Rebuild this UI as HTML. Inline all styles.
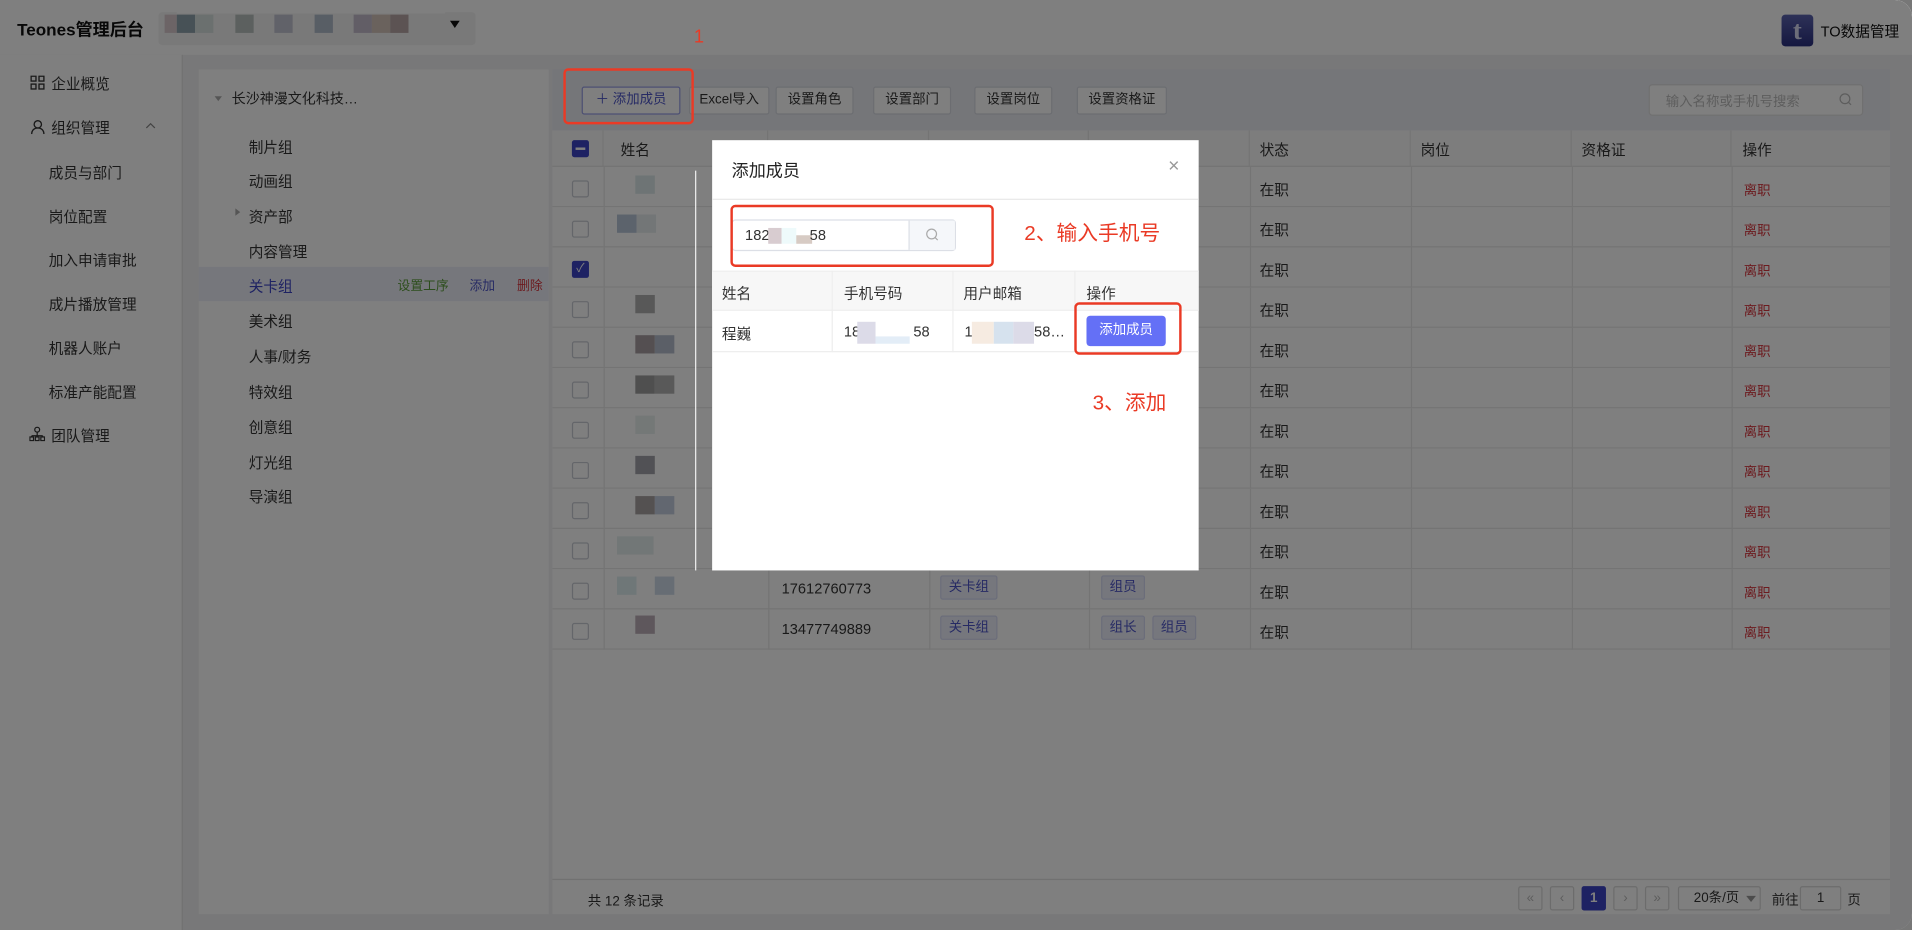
<!DOCTYPE html>
<html><head><meta charset="utf-8"><style>
*{box-sizing:border-box;margin:0;padding:0}
html,body{width:1912px;height:930px;overflow:hidden;background:#777}
body{font-family:"Liberation Sans","Noto Sans CJK SC",sans-serif;color:#333}
#w{position:absolute;left:0;top:0;width:1568px;height:763px;transform:scale(1.2194,1.2189);transform-origin:0 0;background:#f0f0f2;border-radius:0 14px 14px 0;overflow:hidden}
.a{position:absolute;white-space:nowrap}
.f12{font-size:12px}
.btn{position:absolute;top:71px;height:23px;border:1px solid #d8dbe3;background:#fff;border-radius:2px;font-size:11px;line-height:21px;text-align:center;color:#333}
.cb{position:absolute;left:469px;width:14px;height:14px;border:1px solid #c9ccd4;border-radius:2px;background:#fff}
.row{position:absolute;left:453px;width:1097px;height:33px;border-bottom:1px solid #e8e8e8;background:#fff}
.cell{position:absolute;top:0;height:33px;border-right:1px solid #e8e8e8}
.tag{position:absolute;height:20px;padding:0 6px;background:#eceefb;border:1px solid #d6daf5;border-radius:2px;color:#4c55c8;font-size:11px;line-height:18px}
.pg{position:absolute;top:727px;width:20px;height:20px;border:1px solid #d9d9d9;border-radius:2px;background:#fff;font-size:11px;line-height:18px;text-align:center;color:#bbb}
.red{position:absolute;border:2.5px solid #ea3a25;border-radius:4px}
.rt{position:absolute;color:#ea3a25;font-size:17px;white-space:nowrap}
.blur{position:absolute;height:15px}
</style></head><body><div id="w">
<div class="a" style="left:0;top:0;width:1568px;height:45px;background:#fff"></div>
<div class="a" style="left:14px;top:14px;font-size:14px;font-weight:bold;color:#111">Teones管理后台</div>
<div class="a" style="left:130px;top:10px;width:260px;height:27px;background:#f3f3f3;border-radius:3px"></div>
<div class="a" style="left:145px;top:8px;width:220px;height:3px;background:#fff"></div>
<div class="blur" style="left:135px;top:12px;width:10px;background:#d8c9cc"></div>
<div class="blur" style="left:145px;top:12px;width:15px;background:#8fa3ad"></div>
<div class="blur" style="left:160px;top:12px;width:15px;background:#d6e0de"></div>
<div class="blur" style="left:193px;top:12px;width:15px;background:#b8c1be"></div>
<div class="blur" style="left:225px;top:12px;width:15px;background:#c3c5d3"></div>
<div class="blur" style="left:258px;top:12px;width:15px;background:#b0bccb"></div>
<div class="blur" style="left:290px;top:12px;width:15px;background:#c4bccd"></div>
<div class="blur" style="left:305px;top:12px;width:15px;background:#d4c5bb"></div>
<div class="blur" style="left:320px;top:12px;width:15px;background:#b8a6a6"></div>
<div class="a" style="left:369px;top:17px;width:0;height:0;border-left:4px solid transparent;border-right:4px solid transparent;border-top:6px solid #111"></div>
<div class="a" style="left:1461px;top:12px;width:26px;height:26px;border-radius:3px;background:linear-gradient(#5c64b0,#2a2f80);color:#d8dbf2;font-weight:bold;font-size:22px;line-height:26px;text-align:center;font-family:'Liberation Serif',serif">t</div>
<div class="a f12" style="left:1493px;top:17px;color:#111">TO数据管理</div>
<div class="a" style="left:0;top:45px;width:150px;height:718px;background:#fff;border-right:1px solid #e3e3e3"></div>
<svg class="a" style="left:25px;top:62px" width="12" height="12" viewBox="0 0 12 12" fill="none" stroke="#333" stroke-width="1.1"><rect x=".5" y=".5" width="4" height="4"/><rect x="7" y=".5" width="4" height="4"/><rect x=".5" y="7" width="4" height="4"/><rect x="7" y="7" width="4" height="4"/></svg>
<div class="a f12" style="left:42px;top:60px">企业概览</div>
<svg class="a" style="left:25px;top:98px" width="12" height="12" viewBox="0 0 12 12" fill="none" stroke="#333" stroke-width="1.1"><circle cx="6" cy="4" r="3"/><path d="M1 12c0-3 2-5 5-5s5 2 5 5"/></svg>
<div class="a f12" style="left:42px;top:96px">组织管理</div>
<svg class="a" style="left:119px;top:100px" width="9" height="6" viewBox="0 0 9 6" fill="none" stroke="#888"><path d="M1 5L4.5 1.5L8 5"/></svg>
<div class="a f12" style="left:40px;top:133px">成员与部门</div>
<div class="a f12" style="left:40px;top:169px">岗位配置</div>
<div class="a f12" style="left:40px;top:205px">加入申请审批</div>
<div class="a f12" style="left:40px;top:241px">成片播放管理</div>
<div class="a f12" style="left:40px;top:277px">机器人账户</div>
<div class="a f12" style="left:40px;top:313px">标准产能配置</div>
<svg class="a" style="left:24px;top:350px" width="13" height="12" viewBox="0 0 13 12" fill="none" stroke="#333" stroke-width="1"><circle cx="6.5" cy="2.5" r="2"/><path d="M6.5 4.5v3M2 7.5h9M2 7.5v1M11 7.5v1M6.5 7.5v1"/><rect x=".5" y="8.5" width="3" height="3"/><rect x="5" y="8.5" width="3" height="3"/><rect x="9.5" y="8.5" width="3" height="3"/></svg>
<div class="a f12" style="left:42px;top:349px">团队管理</div>
<div class="a" style="left:163px;top:57px;width:287px;height:693px;background:#fff"></div>
<div class="a" style="left:176px;top:79px;width:0;height:0;border-left:3px solid transparent;border-right:3px solid transparent;border-top:4px solid #aaa"></div>
<div class="a" style="left:190px;top:73px;font-size:11.5px">长沙神漫文化科技…</div>
<div class="a" style="left:163px;top:219px;width:287px;height:28px;background:#eceef8"></div>
<div class="a f12" style="left:204px;top:112px">制片组</div>
<div class="a f12" style="left:204px;top:140px">动画组</div>
<div class="a" style="left:193px;top:171px;width:0;height:0;border-top:3px solid transparent;border-bottom:3px solid transparent;border-left:4px solid #aaa"></div>
<div class="a f12" style="left:204px;top:169px">资产部</div>
<div class="a f12" style="left:204px;top:198px">内容管理</div>
<div class="a f12" style="left:204px;top:226px;color:#3c45c6">关卡组</div>
<div class="a" style="left:326px;top:227px;font-size:10.5px;color:#5a9d3a">设置工序</div>
<div class="a" style="left:385px;top:227px;font-size:10.5px;color:#4c55c8">添加</div>
<div class="a" style="left:424px;top:227px;font-size:10.5px;color:#d9363e">删除</div>
<div class="a f12" style="left:204px;top:255px">美术组</div>
<div class="a f12" style="left:204px;top:284px">人事/财务</div>
<div class="a f12" style="left:204px;top:313px">特效组</div>
<div class="a f12" style="left:204px;top:342px">创意组</div>
<div class="a f12" style="left:204px;top:371px">灯光组</div>
<div class="a f12" style="left:204px;top:399px">导演组</div>
<div class="a" style="left:453px;top:57px;width:1097px;height:693px;background:#fff"></div>
<div class="a" style="left:453px;top:57px;width:1097px;height:50px;background:#eaecf3"></div>
<div class="btn" style="left:477px;width:81px;border-color:#9aa0e6;color:#4c55c8">＋ 添加成员</div>
<div class="btn" style="left:565px;width:66px">Excel导入</div>
<div class="btn" style="left:636px;width:64px">设置角色</div>
<div class="btn" style="left:716px;width:64px">设置部门</div>
<div class="btn" style="left:799px;width:64px">设置岗位</div>
<div class="btn" style="left:883px;width:74px">设置资格证</div>
<div class="a" style="left:1352px;top:69px;width:176px;height:26px;background:#fff;border:1px solid #e0e0e0;border-radius:3px"></div>
<div class="a" style="left:1366px;top:75px;font-size:11px;color:#bbb">输入名称或手机号搜索</div>
<svg class="a" style="left:1508px;top:76px" width="11" height="12" viewBox="0 0 11 12" fill="none" stroke="#bbb"><circle cx="5" cy="5" r="4"/><path d="M8 8l2 2"/></svg>
<div class="row" style="top:107px;height:30px;background:#fafafa">
<div class="cell" style="left:0;width:42px;height:30px"></div><div class="cell" style="left:42px;width:135px;height:30px"></div><div class="cell" style="left:177px;width:132px;height:30px"></div><div class="cell" style="left:309px;width:131px;height:30px"></div><div class="cell" style="left:440px;width:132px;height:30px"></div><div class="cell" style="left:572px;width:132px;height:30px"></div><div class="cell" style="left:704px;width:132px;height:30px"></div><div class="cell" style="left:836px;width:131px;height:30px"></div>
</div>
<div class="a" style="left:469px;top:115px;width:14px;height:14px;background:#3c45c6;border-radius:2px"><div style="position:absolute;left:3px;top:6px;width:8px;height:2px;background:#fff"></div></div>
<div class="a f12" style="left:509px;top:114px">姓名</div>
<div class="a f12" style="left:1033px;top:114px">状态</div>
<div class="a f12" style="left:1165px;top:114px">岗位</div>
<div class="a f12" style="left:1297px;top:114px">资格证</div>
<div class="a f12" style="left:1429px;top:114px">操作</div>
<div class="row" style="top:137px"><div class="cell" style="left:42px"></div><div class="cell" style="left:177px"></div><div class="cell" style="left:309px"></div><div class="cell" style="left:440px"></div><div class="cell" style="left:572px"></div><div class="cell" style="left:704px"></div><div class="cell" style="left:836px"></div><div class="cell" style="left:967px"></div></div>
<div class="row" style="top:170px"><div class="cell" style="left:42px"></div><div class="cell" style="left:177px"></div><div class="cell" style="left:309px"></div><div class="cell" style="left:440px"></div><div class="cell" style="left:572px"></div><div class="cell" style="left:704px"></div><div class="cell" style="left:836px"></div><div class="cell" style="left:967px"></div></div>
<div class="row" style="top:203px"><div class="cell" style="left:42px"></div><div class="cell" style="left:177px"></div><div class="cell" style="left:309px"></div><div class="cell" style="left:440px"></div><div class="cell" style="left:572px"></div><div class="cell" style="left:704px"></div><div class="cell" style="left:836px"></div><div class="cell" style="left:967px"></div></div>
<div class="row" style="top:236px"><div class="cell" style="left:42px"></div><div class="cell" style="left:177px"></div><div class="cell" style="left:309px"></div><div class="cell" style="left:440px"></div><div class="cell" style="left:572px"></div><div class="cell" style="left:704px"></div><div class="cell" style="left:836px"></div><div class="cell" style="left:967px"></div></div>
<div class="row" style="top:269px"><div class="cell" style="left:42px"></div><div class="cell" style="left:177px"></div><div class="cell" style="left:309px"></div><div class="cell" style="left:440px"></div><div class="cell" style="left:572px"></div><div class="cell" style="left:704px"></div><div class="cell" style="left:836px"></div><div class="cell" style="left:967px"></div></div>
<div class="row" style="top:302px"><div class="cell" style="left:42px"></div><div class="cell" style="left:177px"></div><div class="cell" style="left:309px"></div><div class="cell" style="left:440px"></div><div class="cell" style="left:572px"></div><div class="cell" style="left:704px"></div><div class="cell" style="left:836px"></div><div class="cell" style="left:967px"></div></div>
<div class="row" style="top:335px"><div class="cell" style="left:42px"></div><div class="cell" style="left:177px"></div><div class="cell" style="left:309px"></div><div class="cell" style="left:440px"></div><div class="cell" style="left:572px"></div><div class="cell" style="left:704px"></div><div class="cell" style="left:836px"></div><div class="cell" style="left:967px"></div></div>
<div class="row" style="top:368px"><div class="cell" style="left:42px"></div><div class="cell" style="left:177px"></div><div class="cell" style="left:309px"></div><div class="cell" style="left:440px"></div><div class="cell" style="left:572px"></div><div class="cell" style="left:704px"></div><div class="cell" style="left:836px"></div><div class="cell" style="left:967px"></div></div>
<div class="row" style="top:401px"><div class="cell" style="left:42px"></div><div class="cell" style="left:177px"></div><div class="cell" style="left:309px"></div><div class="cell" style="left:440px"></div><div class="cell" style="left:572px"></div><div class="cell" style="left:704px"></div><div class="cell" style="left:836px"></div><div class="cell" style="left:967px"></div></div>
<div class="row" style="top:434px"><div class="cell" style="left:42px"></div><div class="cell" style="left:177px"></div><div class="cell" style="left:309px"></div><div class="cell" style="left:440px"></div><div class="cell" style="left:572px"></div><div class="cell" style="left:704px"></div><div class="cell" style="left:836px"></div><div class="cell" style="left:967px"></div></div>
<div class="row" style="top:467px"><div class="cell" style="left:42px"></div><div class="cell" style="left:177px"></div><div class="cell" style="left:309px"></div><div class="cell" style="left:440px"></div><div class="cell" style="left:572px"></div><div class="cell" style="left:704px"></div><div class="cell" style="left:836px"></div><div class="cell" style="left:967px"></div></div>
<div class="row" style="top:500px"><div class="cell" style="left:42px"></div><div class="cell" style="left:177px"></div><div class="cell" style="left:309px"></div><div class="cell" style="left:440px"></div><div class="cell" style="left:572px"></div><div class="cell" style="left:704px"></div><div class="cell" style="left:836px"></div><div class="cell" style="left:967px"></div></div>
<div class="cb" style="top:148px"></div><div class="cb" style="top:181px"></div>
<div class="a" style="left:469px;top:214px;width:14px;height:14px;background:#3c45c6;border-radius:2px;color:#fff;font-size:10px;line-height:14px;text-align:center">✓</div>
<div class="cb" style="top:247px"></div><div class="cb" style="top:280px"></div><div class="cb" style="top:313px"></div><div class="cb" style="top:346px"></div><div class="cb" style="top:379px"></div><div class="cb" style="top:412px"></div><div class="cb" style="top:445px"></div><div class="cb" style="top:478px"></div><div class="cb" style="top:511px"></div>
<div class="blur" style="left:521px;top:144px;width:16px;background:#dce8ea"></div>
<div class="blur" style="left:506px;top:176px;width:16px;background:#b9c6d9"></div><div class="blur" style="left:522px;top:176px;width:16px;background:#e6ecee"></div>
<div class="blur" style="left:521px;top:242px;width:16px;background:#b0b0b0"></div>
<div class="blur" style="left:521px;top:275px;width:16px;background:#a99fa3"></div><div class="blur" style="left:537px;top:275px;width:16px;background:#b6bfcf"></div>
<div class="blur" style="left:521px;top:308px;width:16px;background:#9e9e9e"></div><div class="blur" style="left:537px;top:308px;width:16px;background:#b2b2b2"></div>
<div class="blur" style="left:521px;top:341px;width:16px;background:#e8f0ef"></div>
<div class="blur" style="left:521px;top:374px;width:16px;background:#a3a3ab"></div>
<div class="blur" style="left:521px;top:407px;width:16px;background:#a8a2a3"></div><div class="blur" style="left:537px;top:407px;width:16px;background:#c5cee0"></div>
<div class="blur" style="left:506px;top:440px;width:30px;background:#e5eeee"></div>
<div class="blur" style="left:506px;top:473px;width:16px;background:#dfeef0"></div><div class="blur" style="left:537px;top:473px;width:16px;background:#cedbe8"></div>
<div class="blur" style="left:521px;top:505px;width:16px;background:#bcaeb8"></div>
<div class="a f12" style="left:1033px;top:147px">在职</div><div class="a f12" style="left:1033px;top:180px">在职</div><div class="a f12" style="left:1033px;top:213px">在职</div><div class="a f12" style="left:1033px;top:246px">在职</div><div class="a f12" style="left:1033px;top:279px">在职</div><div class="a f12" style="left:1033px;top:312px">在职</div><div class="a f12" style="left:1033px;top:345px">在职</div><div class="a f12" style="left:1033px;top:378px">在职</div><div class="a f12" style="left:1033px;top:411px">在职</div><div class="a f12" style="left:1033px;top:444px">在职</div><div class="a f12" style="left:1033px;top:477px">在职</div><div class="a f12" style="left:1033px;top:510px">在职</div>
<div class="a" style="left:1430px;top:148px;font-size:11px;color:#d9363e">离职</div><div class="a" style="left:1430px;top:181px;font-size:11px;color:#d9363e">离职</div><div class="a" style="left:1430px;top:214px;font-size:11px;color:#d9363e">离职</div><div class="a" style="left:1430px;top:247px;font-size:11px;color:#d9363e">离职</div><div class="a" style="left:1430px;top:280px;font-size:11px;color:#d9363e">离职</div><div class="a" style="left:1430px;top:313px;font-size:11px;color:#d9363e">离职</div><div class="a" style="left:1430px;top:346px;font-size:11px;color:#d9363e">离职</div><div class="a" style="left:1430px;top:379px;font-size:11px;color:#d9363e">离职</div><div class="a" style="left:1430px;top:412px;font-size:11px;color:#d9363e">离职</div><div class="a" style="left:1430px;top:445px;font-size:11px;color:#d9363e">离职</div><div class="a" style="left:1430px;top:478px;font-size:11px;color:#d9363e">离职</div><div class="a" style="left:1430px;top:511px;font-size:11px;color:#d9363e">离职</div>
<div class="a f12" style="left:641px;top:476px">17612760773</div>
<div class="a f12" style="left:641px;top:509px">13477749889</div>
<div class="tag" style="left:771px;top:472px">关卡组</div><div class="tag" style="left:771px;top:505px">关卡组</div>
<div class="tag" style="left:903px;top:472px">组员</div><div class="tag" style="left:903px;top:505px">组长</div><div class="tag" style="left:945px;top:505px">组员</div>
<div class="a" style="left:453px;top:721px;width:1097px;height:1px;background:#e3e3e3"></div>
<div class="a" style="left:482px;top:731px;font-size:11px">共 12 条记录</div>
<div class="pg" style="left:1245px">«</div><div class="pg" style="left:1271px">‹</div>
<div class="pg" style="left:1297px;background:#3c45c6;border-color:#3c45c6;color:#fff;font-weight:bold">1</div>
<div class="pg" style="left:1323px">›</div><div class="pg" style="left:1349px">»</div>
<div class="a" style="left:1376px;top:727px;width:68px;height:20px;border:1px solid #d9d9d9;border-radius:2px;background:#fff;font-size:11px;line-height:18px;padding-left:12px">20条/页</div>
<div class="a" style="left:1432px;top:735px;width:0;height:0;border-left:4px solid transparent;border-right:4px solid transparent;border-top:5px solid #999"></div>
<div class="a" style="left:1453px;top:730px;font-size:11px">前往</div>
<div class="a" style="left:1476px;top:727px;width:34px;height:20px;border:1px solid #d9d9d9;border-radius:2px;background:#fff;font-size:11px;line-height:18px;text-align:center">1</div>
<div class="a" style="left:1515px;top:730px;font-size:11px">页</div>
<div class="a" style="left:0;top:0;width:1568px;height:763px;background:#000;opacity:.5"></div>
<div class="a" style="left:570px;top:140px;width:1px;height:328px;background:#eee"></div>
<div class="a" style="left:584px;top:115px;width:399px;height:353px;background:#fff"></div>
<div class="a" style="left:600px;top:130px;font-size:14px;color:#222">添加成员</div>
<div class="a" style="left:958px;top:128px;font-size:16px;color:#999">×</div>
<div class="a" style="left:584px;top:163px;width:399px;height:1px;background:#e8e8e8"></div>
<div class="a" style="left:600px;top:180px;width:184px;height:26px;border:1px solid #dcdfe6;border-radius:3px"></div>
<div class="a" style="left:745px;top:181px;width:38px;height:24px;background:#f5f7fa;border-left:1px solid #dcdfe6"></div>
<svg class="a" style="left:759px;top:187px" width="11" height="12" viewBox="0 0 11 12" fill="none" stroke="#aaa"><circle cx="5" cy="5" r="4"/><path d="M8 8l2 2"/></svg>
<div class="a f12" style="left:611px;top:186px">182</div>
<div class="blur" style="left:630px;top:187px;width:11px;height:13px;background:#d8ccd0"></div>
<div class="blur" style="left:641px;top:187px;width:12px;height:13px;background:#eefafb"></div>
<div class="blur" style="left:653px;top:193px;width:13px;height:7px;background:#d7cbc4"></div>
<div class="a f12" style="left:664px;top:186px">58</div>
<div class="a" style="left:584px;top:222px;width:399px;height:33px;background:#f7f7f7;border-top:1px solid #eee;border-bottom:1px solid #eee"></div>
<div class="a" style="left:584px;top:288px;width:399px;height:1px;background:#eee"></div>
<div class="a" style="left:682px;top:222px;width:1px;height:67px;background:#eee"></div>
<div class="a" style="left:781px;top:222px;width:1px;height:67px;background:#eee"></div>
<div class="a" style="left:881px;top:222px;width:1px;height:67px;background:#eee"></div>
<div class="a f12" style="left:592px;top:232px">姓名</div>
<div class="a f12" style="left:692px;top:232px">手机号码</div>
<div class="a f12" style="left:790px;top:232px">用户邮箱</div>
<div class="a f12" style="left:891px;top:232px">操作</div>
<div class="a f12" style="left:592px;top:265px">程巍</div>
<div class="a f12" style="left:692px;top:265px">18</div>
<div class="blur" style="left:703px;top:264px;width:15px;height:18px;background:#dcdbe8"></div>
<div class="blur" style="left:718px;top:276px;width:28px;height:6px;background:#e3edf7"></div>
<div class="a f12" style="left:749px;top:265px">58</div>
<div class="a f12" style="left:791px;top:265px">1</div>
<div class="blur" style="left:797px;top:264px;width:18px;height:18px;background:#f6ebe1"></div>
<div class="blur" style="left:815px;top:264px;width:16px;height:18px;background:#d6e2ee"></div>
<div class="blur" style="left:831px;top:264px;width:17px;height:18px;background:#dcdbe8"></div>
<div class="a f12" style="left:848px;top:265px">58…</div>
<div class="a" style="left:891px;top:259px;width:65px;height:25px;background:#6470f6;border-radius:3px;color:#fff;font-size:11px;line-height:25px;text-align:center">添加成员</div>
<div class="red" style="left:462px;top:56px;width:107px;height:46px"></div>
<div class="rt" style="left:569px;top:22px;font-size:15px">1</div>
<div class="red" style="left:599px;top:168px;width:216px;height:51px"></div>
<div class="rt" style="left:840px;top:177px">2、输入手机号</div>
<div class="red" style="left:881px;top:248px;width:88px;height:43px"></div>
<div class="rt" style="left:896px;top:316px">3、添加</div>
</div></body></html>
